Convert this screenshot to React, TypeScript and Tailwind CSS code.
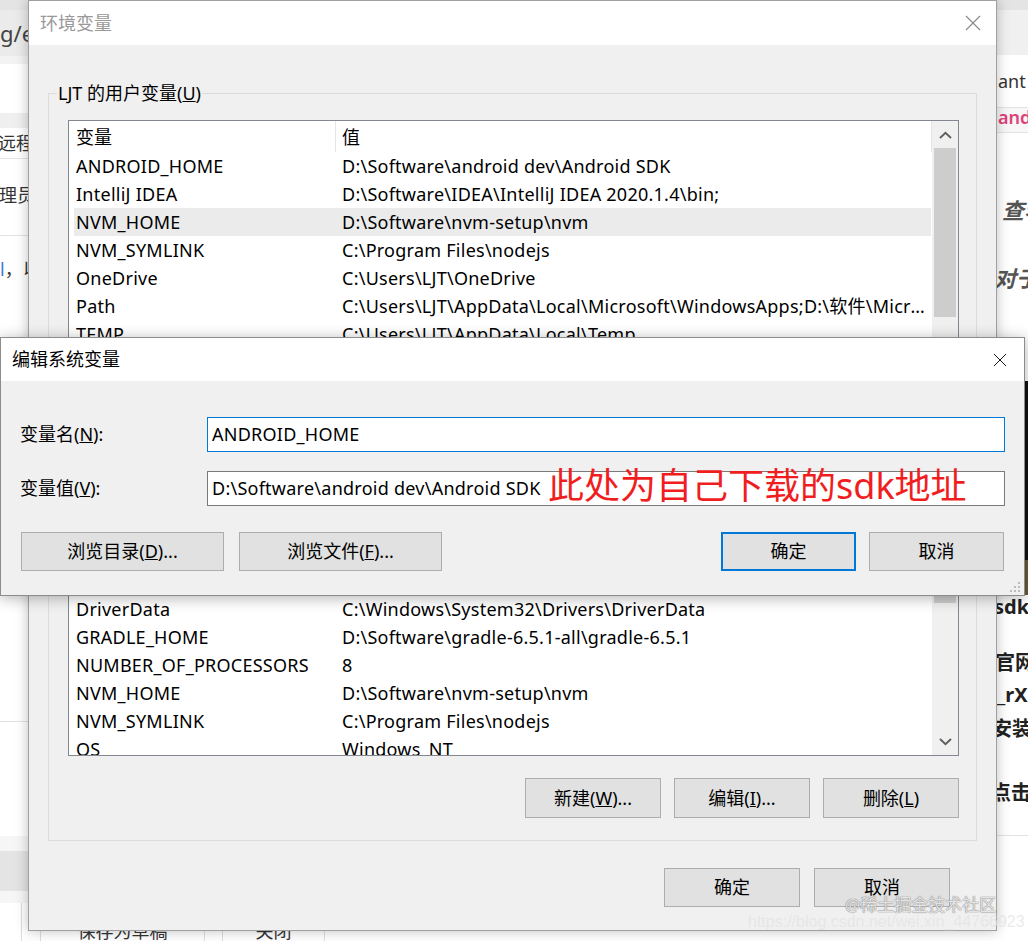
import React from "react";

type Row = [string, string];

const userRows: Row[] = [
  ["ANDROID_HOME", "D:\\Software\\android dev\\Android SDK"],
  ["IntelliJ IDEA", "D:\\Software\\IDEA\\IntelliJ IDEA 2020.1.4\\bin;"],
  ["NVM_HOME", "D:\\Software\\nvm-setup\\nvm"],
  ["NVM_SYMLINK", "C:\\Program Files\\nodejs"],
  ["OneDrive", "C:\\Users\\LJT\\OneDrive"],
  ["Path", "C:\\Users\\LJT\\AppData\\Local\\Microsoft\\WindowsApps;D:\\软件\\Microsoft VS Code\\bin"],
  ["TEMP", "C:\\Users\\LJT\\AppData\\Local\\Temp"],
  ["TMP", "C:\\Users\\LJT\\AppData\\Local\\Temp"],
];

const systemRows: Row[] = [
  ["ANDROID_HOME", "D:\\Software\\android dev\\Android SDK"],
  ["ComSpec", "C:\\Windows\\system32\\cmd.exe"],
  ["CUDA_PATH", "C:\\Program Files\\NVIDIA GPU Computing Toolkit\\CUDA\\v10.1"],
  ["CUDA_PATH_V10_1", "C:\\Program Files\\NVIDIA GPU Computing Toolkit\\CUDA\\v10.1"],
  ["DriverData", "C:\\Windows\\System32\\Drivers\\DriverData"],
  ["GRADLE_HOME", "D:\\Software\\gradle-6.5.1-all\\gradle-6.5.1"],
  ["NUMBER_OF_PROCESSORS", "8"],
  ["NVM_HOME", "D:\\Software\\nvm-setup\\nvm"],
  ["NVM_SYMLINK", "C:\\Program Files\\nodejs"],
  ["OS", "Windows_NT"],
  ["Path", "C:\\Windows\\system32;C:\\Windows"],
];

function CloseX({ color, size }: { color: string; size: number }) {
  return (
    <svg width={size} height={size} viewBox="0 0 16 16">
      <path d="M1 1L15 15M15 1L1 15" stroke={color} strokeWidth="1.1" fill="none" />
    </svg>
  );
}

function Chevron({ up }: { up: boolean }) {
  return (
    <svg width="13" height="8" viewBox="0 0 13 8">
      <path
        d={up ? "M1 7L6.5 1.8L12 7" : "M1 1L6.5 6.2L12 1"}
        stroke="#606060"
        strokeWidth="2"
        fill="none"
      />
    </svg>
  );
}

function WinButton({
  children,
  className = "",
}: {
  children: React.ReactNode;
  className?: string;
}) {
  return (
    <div
      className={`flex items-center justify-center bg-[#e1e1e1] text-[18px] text-black ${className}`}
    >
      {children}
    </div>
  );
}

function VarList({
  rows,
  selected,
  className,
  thumbClass,
}: {
  rows: Row[];
  selected: number;
  className: string;
  thumbClass: string;
}) {
  return (
    <div className={`flex border border-[#828790] bg-white ${className}`}>
      <div className="flex min-w-0 flex-1 flex-col overflow-hidden">
        <div className="flex h-[31px] shrink-0 items-center border-r border-[#e5e5e5]">
          <div className="flex w-[267px] shrink-0 items-center self-stretch border-r border-[#e5e5e5] pl-[7px] pt-[2px]">
            变量
          </div>
          <div className="pl-[6px] pt-[2px]">值</div>
        </div>
        {rows.map((r, i) => (
          <div
            key={i}
            className={`ml-[5px] mr-[1px] flex h-[28px] shrink-0 items-center tracking-[0.25px] ${
              i === selected ? "bg-[#ebebeb]" : ""
            }`}
          >
            <div className="w-[268px] shrink-0 whitespace-nowrap pl-[2px]">{r[0]}</div>
            <div className="min-w-0 flex-1 truncate pr-[4px]">{r[1]}</div>
          </div>
        ))}
      </div>
      <div className="flex w-[26px] shrink-0 flex-col bg-[#f0f0f0]">
        <div className="flex h-[27px] shrink-0 items-center justify-center">
          <Chevron up />
        </div>
        <div className={`mx-[2px] shrink-0 bg-[#cdcdcd] ${thumbClass}`} />
        <div className="flex-1" />
        <div className="flex h-[27px] shrink-0 items-center justify-center">
          <Chevron up={false} />
        </div>
      </div>
    </div>
  );
}

function LeftStrip() {
  return (
    <div className="flex w-[28px] shrink-0 flex-col overflow-hidden text-[18px] text-[#333]">
      <div className="h-[10px] shrink-0 bg-[#e4e4e4]" />
      <div className="flex h-[46px] shrink-0 items-center whitespace-nowrap bg-[#ebebeb] text-[22px] leading-none text-[#444]">
        g/ed
      </div>
      <div className="h-[8px] shrink-0 bg-[#f3f3f3]" />
      <div className="h-[49px] shrink-0" />
      <div className="h-[15px] shrink-0 bg-[#efefef]" />
      <div className="flex h-[31px] shrink-0 items-center whitespace-nowrap border-b border-[#e5e5e5]">
        <span className="-ml-[2px]">远程桌</span>
      </div>
      <div className="h-[21px] shrink-0" />
      <div className="flex h-[30px] shrink-0 items-center whitespace-nowrap">
        <span className="-ml-[1px]">理员权</span>
      </div>
      <div className="h-[26px] shrink-0 border-b border-[#e3e3e3]" />
      <div className="h-[18px] shrink-0" />
      <div className="flex h-[30px] shrink-0 items-center whitespace-nowrap">
        <span className="text-[#3a7bd5]">l</span>
        <span>，以</span>
      </div>
      <div className="h-[438px] shrink-0 border-b border-[#e3e3e3]" />
      <div className="h-[114px] shrink-0" />
      <div className="h-[15px] shrink-0 bg-[#f6f6f6]" />
      <div className="h-[40px] shrink-0 bg-[#e4e4e4]" />
      <div className="h-[12px] shrink-0 bg-[#f6f6f6]" />
      <div className="flex-1">
        <div className="h-full w-[22px] border-r border-[#dddddd]" />
      </div>
    </div>
  );
}

function MiddlePage() {
  return (
    <div className="flex w-[969px] shrink-0 flex-col bg-white">
      <div className="h-[905px] shrink-0" />
      <div className="flex pl-[12px] text-[18px] text-[#333]">
        <div className="flex h-[52px] w-[165px] items-center justify-center border border-[#dddddd]">
          保存为草稿
        </div>
        <div className="ml-[17px] flex h-[52px] w-[103px] items-center justify-center border border-[#dddddd]">
          关闭
        </div>
      </div>
    </div>
  );
}

function RightStrip() {
  return (
    <div className="flex min-w-0 flex-1 flex-col overflow-hidden whitespace-nowrap text-[18px] text-[#333]">
      <div className="h-[10px] shrink-0 bg-[#e4e4e4]" />
      <div className="h-[45px] shrink-0 bg-[#f0f0f0]" />
      <div className="flex h-[52px] shrink-0 items-center">
        <span className="ml-[1px]">ant</span>
      </div>
      <div className="flex h-[26px] shrink-0 items-center border-y border-[#e3e3e3] bg-[#f7f7f7] pb-[5px] font-semibold text-[#e0407a]">
        <span className="ml-[1px]">and</span>
      </div>
      <div className="h-[63px] shrink-0" />
      <div className="flex h-[28px] shrink-0 items-center text-[22px] font-bold italic text-[#555]">
        <span className="ml-[5px]">查看</span>
      </div>
      <div className="h-[40px] shrink-0" />
      <div className="flex h-[28px] shrink-0 items-center text-[22px] font-bold italic text-[#555]">
        <span className="-ml-[3px]">对于</span>
      </div>
      <div className="h-[89px] shrink-0" />
      <div className="h-[179px] shrink-0 bg-[#111]" />
      <div className="h-[35px] shrink-0 bg-[#6b5a3a]" />
      <div className="flex h-[24px] shrink-0 items-center text-[20px] font-bold text-[#222]">
        <span className="-ml-[3px]">sdk</span>
      </div>
      <div className="h-[32px] shrink-0" />
      <div className="flex h-[24px] shrink-0 items-center text-[20px] font-bold text-[#222]">
        <span className="-ml-[2px]">官网</span>
      </div>
      <div className="h-[8px] shrink-0" />
      <div className="flex h-[24px] shrink-0 items-center text-[20px] font-bold text-[#222]">
        <span>_rX</span>
      </div>
      <div className="h-[10px] shrink-0" />
      <div className="flex h-[24px] shrink-0 items-center text-[20px] font-bold text-[#222]">
        <span className="-ml-[5px]">安装</span>
      </div>
      <div className="h-[40px] shrink-0" />
      <div className="flex h-[24px] shrink-0 items-center text-[20px] font-bold text-[#222]">
        <span className="-ml-[6px]">点击</span>
      </div>
      <div className="h-[31px] shrink-0 border-b border-[#e3e3e3]" />
      <div className="flex-1" />
    </div>
  );
}

function EnvWindow() {
  return (
    <div className="absolute left-[28px] top-0 flex h-[931px] w-[969px] flex-col border border-[#a0a0a0] bg-[#f0f0f0] shadow-[0_0_12px_rgba(0,0,0,0.25)]">
      <div className="flex h-[44px] shrink-0 items-center justify-between bg-white pl-[11px] pr-[15px]">
        <span className="text-[18px] text-[#999]">环境变量</span>
        <CloseX color="#888" size={16} />
      </div>
      <div className="flex flex-1 flex-col px-[19px]">
        <fieldset className="mt-[36px] border border-[#dcdcdc] pb-[12px] pl-[8px]">
          <legend className="px-[1px] leading-[24px]">
            LJT 的用户变量(<u>U</u>)
          </legend>
          <VarList
            rows={userRows}
            selected={2}
            className="ml-[11px] mt-[15px] h-[242px] w-[891px]"
            thumbClass="h-[169px]"
          />
          <div className="ml-[11px] mt-[6px] flex w-[891px] justify-end gap-[13px]">
            <WinButton className="h-[40px] w-[136px] border border-[#adadad]">
              新建(<u>N</u>)...
            </WinButton>
            <WinButton className="h-[40px] w-[136px] border border-[#adadad]">
              编辑(<u>E</u>)...
            </WinButton>
            <WinButton className="h-[40px] w-[136px] border border-[#adadad]">
              删除(<u>D</u>)
            </WinButton>
          </div>
        </fieldset>
        <fieldset className="mt-[6px] border border-[#dcdcdc] pb-[22px] pl-[8px]">
          <legend className="px-[1px] leading-[24px]">
            系统变量(<u>S</u>)
          </legend>
          <VarList
            rows={systemRows}
            selected={-1}
            className="ml-[11px] h-[305px] w-[891px]"
            thumbClass="h-[124px]"
          />
          <div className="ml-[11px] mt-[22px] flex w-[891px] justify-end gap-[13px]">
            <WinButton className="h-[40px] w-[136px] border border-[#adadad]">
              新建(<u>W</u>)...
            </WinButton>
            <WinButton className="h-[40px] w-[136px] border border-[#adadad]">
              编辑(<u>I</u>)...
            </WinButton>
            <WinButton className="h-[40px] w-[136px] border border-[#adadad]">
              删除(<u>L</u>)
            </WinButton>
          </div>
        </fieldset>
        <div className="mt-[27px] flex justify-end gap-[14px] pr-[27px]">
          <WinButton className="h-[39px] w-[136px] border border-[#adadad]">确定</WinButton>
          <WinButton className="h-[39px] w-[136px] border border-[#adadad]">取消</WinButton>
        </div>
      </div>
    </div>
  );
}

function EditDialog() {
  return (
    <div className="absolute left-0 top-[337px] flex h-[259px] w-[1025px] flex-col border border-[#8c8c8c] bg-[#f0f0f0] shadow-[0_2px_14px_rgba(0,0,0,0.3)]">
      <div className="flex h-[43px] shrink-0 items-center justify-between bg-white pl-[11px] pr-[17px]">
        <span className="text-[18px] text-black">编辑系统变量</span>
        <CloseX color="#111" size={14} />
      </div>
      <div className="relative flex flex-1 flex-col pl-[19px] pr-[18px]">
        <div className="mt-[36px] flex h-[35px] items-center">
          <div className="w-[187px] shrink-0">
            变量名(<u>N</u>):
          </div>
          <div className="flex h-[35px] w-[798px] items-center border border-[#0078d7] bg-white pl-[4px] tracking-[0.25px]">
            ANDROID_HOME
          </div>
        </div>
        <div className="mt-[19px] flex h-[35px] items-center">
          <div className="w-[187px] shrink-0">
            变量值(<u>V</u>):
          </div>
          <div className="flex h-[35px] w-[798px] items-center border border-[#7a7a7a] bg-white pl-[4px] tracking-[0.25px]">
            D:\Software\android dev\Android SDK
          </div>
        </div>
        <div className="mt-[26px] flex justify-between">
          <div className="ml-[1px] flex gap-[15px]">
            <WinButton className="h-[39px] w-[203px] border border-[#adadad]">
              浏览目录(<u>D</u>)...
            </WinButton>
            <WinButton className="h-[39px] w-[203px] border border-[#adadad]">
              浏览文件(<u>F</u>)...
            </WinButton>
          </div>
          <div className="mr-[2px] flex gap-[13px]">
            <WinButton className="h-[39px] w-[135px] border-2 border-[#0078d7]">确定</WinButton>
            <WinButton className="h-[39px] w-[135px] border border-[#adadad]">取消</WinButton>
          </div>
        </div>
        <svg className="absolute bottom-[2px] right-[3px]" width="12" height="12" viewBox="0 0 12 12">
          <rect x="9" y="1" width="2" height="2" fill="#bcbcbc" />
          <rect x="9" y="5" width="2" height="2" fill="#bcbcbc" />
          <rect x="5" y="5" width="2" height="2" fill="#bcbcbc" />
          <rect x="9" y="9" width="2" height="2" fill="#bcbcbc" />
          <rect x="5" y="9" width="2" height="2" fill="#bcbcbc" />
          <rect x="1" y="9" width="2" height="2" fill="#bcbcbc" />
        </svg>
      </div>
    </div>
  );
}

export default function App() {
  return (
    <div className="relative h-[941px] w-[1028px] overflow-hidden bg-white font-['Noto_Sans','Noto_Sans_CJK_SC',sans-serif] text-[18px] text-black">
      <div className="flex h-full w-full">
        <LeftStrip />
        <MiddlePage />
        <RightStrip />
      </div>
      <EnvWindow />
      <EditDialog />
      <div className="absolute left-[548px] top-[468px] whitespace-nowrap text-[36px] leading-[36px] text-[#f01e1e]">
        此处为自己下载的sdk地址
      </div>
      <div className="absolute left-[845px] top-[893px] whitespace-nowrap text-[17px] leading-[24px] text-white/80 [text-shadow:0_0_1px_#777,0_0_1px_#777]">
        @稀土掘金技术社区
      </div>
      <div className="absolute left-[748px] top-[912px] whitespace-nowrap font-['Liberation_Sans',sans-serif] text-[16px] leading-[20px] text-[#e2e2e2]/70">
        https://blog.csdn.net/wei.xin_44766923
      </div>
    </div>
  );
}
